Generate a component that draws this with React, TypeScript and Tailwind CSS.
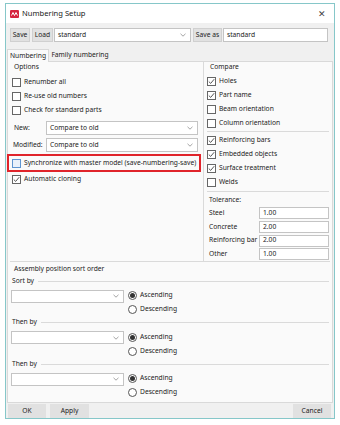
import React from "react";

const F = { fontFamily: '"Noto Sans", "Open Sans", sans-serif' };

function Check({ checked = false, focus = false }: { checked?: boolean; focus?: boolean }) {
  return (
    <span
      className={
        "w-[9px] h-[9px] border flex items-center justify-center shrink-0 " +
        (focus ? "border-[#5f95d0] bg-[#e9f1fb]" : "border-[#666] bg-white")
      }
    >
      {checked && (
        <svg width="7" height="7" viewBox="0 0 7 7">
          <path d="M0.8 3.6 L2.7 5.4 L6.2 1.2" stroke="#444" strokeWidth="0.9" fill="none" />
        </svg>
      )}
    </span>
  );
}

function CheckRow({ label, checked = false }: { label: string; checked?: boolean }) {
  return (
    <div className="flex items-center gap-[3px] h-[14px] whitespace-nowrap">
      <Check checked={checked} />
      <span>{label}</span>
    </div>
  );
}

function Radio({ on = false, label }: { on?: boolean; label: string }) {
  return (
    <div className="flex items-center gap-[3px] h-[14px] whitespace-nowrap">
      <span className="w-[9px] h-[9px] rounded-full border border-[#555] bg-white flex items-center justify-center shrink-0">
        {on && <span className="w-[5px] h-[5px] rounded-full bg-[#333]" />}
      </span>
      <span>{label}</span>
    </div>
  );
}

function Chevron() {
  return (
    <svg width="6" height="4" viewBox="0 0 6 4" className="shrink-0">
      <path d="M0.5 0.8 L3 3.2 L5.5 0.8" stroke="#9a9a9a" strokeWidth="0.9" fill="none" />
    </svg>
  );
}

function Combo({ text = "", cls }: { text?: string; cls: string }) {
  return (
    <div className={"bg-white border border-[#c4c4c4] flex items-center justify-between pl-[3px] pr-[4px] whitespace-nowrap " + cls}>
      <span>{text}</span>
      <Chevron />
    </div>
  );
}

function Btn({ label, cls }: { label: string; cls: string }) {
  return (
    <div className={"bg-[#e1e1e1] border flex items-center justify-center whitespace-nowrap " + cls}>{label}</div>
  );
}

function SortGroup({ title }: { title: string }) {
  return (
    <div className="flex flex-col">
      <div className="flex items-center h-[12.5px] pl-[2px] pr-[1px] gap-[4px]">
        <span>{title}</span>
        <span className="flex-1 border-t border-[#dadada]" />
      </div>
      <div className="flex pl-[1px] mt-[1px]">
        <div className="pt-[1px]">
          <Combo cls="w-[113px] h-[13px]" />
        </div>
        <div className="flex flex-col ml-[4px]">
          <Radio on label="Ascending" />
          <Radio label="Descending" />
        </div>
      </div>
    </div>
  );
}

export default function App() {
  return (
    <div className="w-[340px] h-[425px] bg-white text-[6.7px] text-[#1a1a1a] leading-none" style={F}>
      <div className="ml-[5px] mt-[3px] w-[330px] h-[416px] border border-[#86c7c9] flex flex-col">
        {/* Title bar */}
        <div className="h-[19px] bg-white flex items-center pl-[4px] pr-[8px] shrink-0">
          <svg width="9" height="8" viewBox="0 0 9 8" className="shrink-0">
            <rect x="0" y="0" width="9" height="8" rx="1" fill="#d6243f" />
            <path d="M1.5 5.5 L3 2.5 L4.5 5.5 L6 2.5 L7.5 5.5" stroke="#fff" strokeWidth="1" fill="none" />
          </svg>
          <span className="ml-[3px] text-[7.6px]">Numbering Setup</span>
          <span className="ml-auto text-[9px] text-[#444]">✕</span>
        </div>
        {/* Body */}
        <div className="flex-1 bg-[#f0f0f0] flex flex-col">
          {/* toolbar */}
          <div className="flex items-center mt-[5px] h-[14px] pl-[4px]">
            <Btn label="Save" cls="w-[20px] h-[14px] border-[#d0d0d0]" />
            <Btn label="Load" cls="w-[21px] h-[14px] ml-[2px] border-[#d0d0d0]" />
            <Combo text="standard" cls="w-[137px] h-[14px] ml-[1px]" />
            <Btn label="Save as" cls="w-[29px] h-[14px] ml-[2px] border-[#d0d0d0]" />
            <div className="w-[105px] h-[14px] ml-[1px] bg-white border border-[#c4c4c4] flex items-center pl-[3px]">standard</div>
          </div>
          {/* tabs */}
          <div className="flex items-end mt-[7px] h-[12px] pl-[1px] relative z-10 whitespace-nowrap">
            <div className="h-[13px] w-[42px] bg-[#fafafa] border border-[#d9d9d9] border-b-0 flex items-center justify-center -mb-[1px]">
              Numbering
            </div>
            <div className="h-[12px] w-[62px] flex items-center justify-center">Family numbering</div>
          </div>
          {/* panel */}
          <div className="ml-[1px] w-[326px] h-[342px] bg-[#fafafa] border border-[#d9d9d9] flex flex-col">
            {/* top section */}
            <div className="flex h-[199px]">
              {/* left */}
              <div className="w-[196px] flex flex-col pl-[4px]">
                <div className="h-[11px] flex items-center pl-[2px]">Options</div>
                <div className="mt-[2px]">
                  <CheckRow label="Renumber all" />
                  <CheckRow label="Re-use old numbers" />
                  <CheckRow label="Check for standard parts" />
                </div>
                <div className="flex items-center h-[14px] mt-[4px]">
                  <span className="w-[34px] pl-[2px]">New:</span>
                  <Combo text="Compare to old" cls="w-[152px] h-[14px]" />
                </div>
                <div className="flex items-center h-[14px] mt-[3px]">
                  <span className="w-[34px] pl-[1px] text-[#1a1a1a]">Modified:</span>
                  <Combo text="Compare to old" cls="w-[152px] h-[14px]" />
                </div>
                <div className="-ml-[5px] w-[194px] h-[18px] mt-[2px] border-2 border-[#e0242b] flex items-center pl-[3px] gap-[3px] whitespace-nowrap">
                  <Check focus />
                  <span>Synchronize with master model (save-numbering-save)</span>
                </div>
                <CheckRow label="Automatic cloning" checked />
              </div>
              {/* right */}
              <div className="flex-1 border-l border-[#dadada] flex flex-col pl-[3px] pr-[3px]">
                <div className="h-[11px] flex items-center pl-[3px]">Compare</div>
                <div className="mt-[2px]">
                  <CheckRow label="Holes" checked />
                  <CheckRow label="Part name" checked />
                  <CheckRow label="Beam orientation" />
                  <CheckRow label="Column orientation" />
                </div>
                <div className="border-t border-[#dadada] my-[1px]" />
                <div>
                  <CheckRow label="Reinforcing bars" checked />
                  <CheckRow label="Embedded objects" checked />
                  <CheckRow label="Surface treatment" checked />
                  <CheckRow label="Welds" />
                </div>
                <div className="border-t border-[#dadada] mt-[2px]" />
                <div className="h-[14px] flex items-center pl-[2px] mt-[1px]">Tolerance:</div>
                {[
                  ["Steel", "1.00"],
                  ["Concrete", "2.00"],
                  ["Reinforcing bar", "2.00"],
                  ["Other", "1.00"],
                ].map(([l, v]) => (
                  <div key={l} className="flex items-center h-[14.5px] whitespace-nowrap">
                    <span className="w-[52px] pl-[2px]">{l}</span>
                    <div className="w-[70px] h-[12px] bg-white border border-[#c4c4c4] flex items-center pl-[3px]">{v}</div>
                  </div>
                ))}
              </div>
            </div>
            {/* sort section */}
            <div className="mx-[2px] border-t border-[#dadada] flex flex-col">
              <div className="h-[12px] flex items-center pl-[4px] mt-[1px]">Assembly position sort order</div>
              <SortGroup title="Sort by" />
              <SortGroup title="Then by" />
              <SortGroup title="Then by" />
            </div>
          </div>
          {/* bottom buttons */}
          <div className="flex items-center mt-[1px] h-[14px] pl-[2px] pr-[3px]">
            <Btn label="OK" cls="w-[38px] h-[14px] border-[#e1e1e1]" />
            <Btn label="Apply" cls="w-[39px] h-[14px] ml-[4px] border-[#e1e1e1]" />
            <Btn label="Cancel" cls="w-[38px] h-[14px] ml-auto border-[#e1e1e1]" />
          </div>
        </div>
      </div>
    </div>
  );
}
